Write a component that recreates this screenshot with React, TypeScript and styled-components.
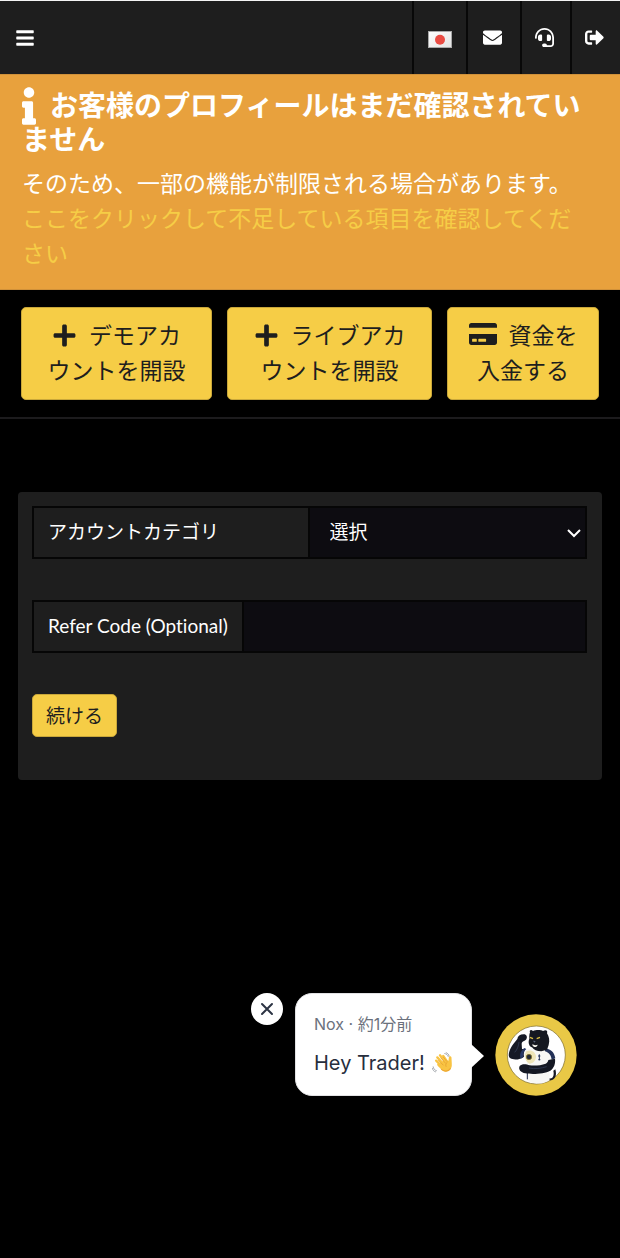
import * as React from "react";
import styled, { createGlobalStyle } from "styled-components";
import {
  FaBars,
  FaCreditCard,
  FaEnvelope,
  FaHeadset,
  FaInfo,
  FaPlus,
  FaSignOutAlt,
} from "react-icons/fa";

const GlobalStyle = createGlobalStyle`
  * {
    box-sizing: border-box;
  }
  body {
    margin: 0;
    background: #000;
    color: #fff;
    font-family: Lato, "Noto Sans CJK JP", sans-serif;
    font-size: 19px;
    font-variant-ligatures: none;
  }
  button, input, select {
    font: inherit;
  }
`;

const TopBar = styled.header`
  display: flex;
  justify-content: space-between;
  height: 74px;
  background: #1e1e1e;
  border-top: 1px solid #f4f4f4;
`;

const BarActions = styled.nav`
  display: flex;
`;

const MenuButton = styled.button`
  display: flex;
  align-items: center;
  padding: 0 15px;
  border: 0;
  background: none;
  color: #fff;
`;

const BarButton = styled.button<{ $narrow?: boolean }>`
  display: flex;
  align-items: center;
  justify-content: center;
  width: ${(p) => (p.$narrow ? 50 : 54)}px;
  padding: 0 4px 0 0;
  border: 0;
  border-left: 2px solid #080808;
  background: none;
  color: #fff;
`;

const Flag = styled.svg`
  display: block;
  margin: 4px 0 0 4px;
`;

const Notice = styled.section`
  padding: 13px 30px 18px 22px;
  border: solid #d0913a;
  border-width: 1px 0;
  background: #e8a13d;
`;

const NoticeTitle = styled.h4`
  margin: 0 0 10px;
  font-size: 28px;
  line-height: 34px;
  font-weight: 700;

  /* negative margins keep the tall icon from stretching the first line */
  svg {
    width: 14px;
    height: 38px;
    margin: -8px 14px -8px 0;
    vertical-align: -1px;
  }
`;

const NoticeText = styled.p`
  margin: 0;
  font-size: 23px;
  line-height: 35px;

  a {
    color: #f6cd46;
    text-decoration: none;
  }
`;

const QuickActions = styled.div`
  display: grid;
  grid-template-columns: 191fr 205fr 152fr;
  gap: 15px;
  padding: 17px 21px;
  border-bottom: 2px solid #1c1b1d;
`;

const QuickButton = styled.button`
  padding: 10px 20px 11px;
  border: 1px solid #c9a73a;
  border-radius: 5px;
  background: #f6cd46;
  color: #1e1e1e;
  font-size: 23px;
  line-height: 35px;

  svg {
    margin-right: 12px;
    vertical-align: -4px;
  }
`;

const Card = styled.form`
  margin: 73px 18px 0;
  padding: 14px 15px 43px 14px;
  border-radius: 4px;
  background: #1e1e1e;
`;

const Field = styled.div`
  display: flex;
  height: 53px;
  margin-bottom: 41px;
  border: 2px solid #060606;
`;

const FieldLabel = styled.label<{ $half?: boolean }>`
  flex: none;
  width: ${(p) => (p.$half ? "50%" : "auto")};
  padding: 0 14px;
  border-right: 2px solid #060606;
  line-height: 48px;
`;

const SelectBox = styled.div`
  display: flex;
  flex: 1;
  position: relative;

  svg {
    position: absolute;
    right: 4px;
    top: 20px;
    pointer-events: none;
  }
`;

const Select = styled.select`
  flex: 1;
  appearance: none;
  padding: 0 20px 2px;
  border: 0;
  border-radius: 0;
  background: #0d0c11;
  color: #fff;
`;

const TextInput = styled.input`
  flex: 1;
  min-width: 0;
  padding: 0 14px;
  border: 0;
  background: #0d0c11;
  color: #fff;
`;

const SubmitButton = styled.button`
  display: block;
  height: 43px;
  padding: 0 13px 2px;
  border: 1px solid #c9a73a;
  border-radius: 5px;
  background: #f6cd46;
  color: #1e1e1e;
`;

const ChatWidget = styled.aside`
  position: fixed;
  right: 43px;
  bottom: 162px;
  display: flex;
  align-items: flex-start;
  font-family: Inter, "Noto Sans CJK JP", sans-serif;
`;

const CloseButton = styled.button`
  display: flex;
  align-items: center;
  justify-content: center;
  width: 32px;
  height: 32px;
  margin-right: 12px;
  padding: 0;
  border: 0;
  border-radius: 50%;
  background: #fff;
  color: #2c3444;
`;

const Bubble = styled.div`
  position: relative;
  width: 177px;
  height: 103px;
  padding: 18px;
  border: 1px solid #e2e2e4;
  border-radius: 17px;
  background: #fff;

  &::after {
    content: "";
    position: absolute;
    left: 100%;
    top: 50px;
    border: 12px solid transparent;
    border-left: 13px solid #fff;
    border-right: 0;
  }
`;

const BubbleMeta = styled.p`
  margin: 0 0 13px;
  color: #6b717d;
  font-size: 16px;
  line-height: 24px;
`;

const BubbleText = styled.p`
  display: flex;
  align-items: center;
  gap: 7px;
  margin: 0;
  color: #272e3d;
  font-size: 20px;
  line-height: 28px;
  white-space: nowrap;
`;

const AvatarButton = styled.button`
  margin: 21px 0 0 23px;
  padding: 0;
  border: 0;
  border-radius: 50%;
  background: none;

  svg {
    display: block;
  }
`;

function JapanFlag() {
  return (
    <Flag width="24" height="18" viewBox="0 0 24 18" aria-hidden="true">
      <defs>
        <linearGradient id="flag" x1="0" y1="0" x2="1" y2="1">
          <stop offset="0" stopColor="#fff" />
          <stop offset="1" stopColor="#e2e2e2" />
        </linearGradient>
      </defs>
      <rect x=".5" y=".5" width="23" height="16" fill="url(#flag)" stroke="#a9a9a9" />
      <circle cx="12" cy="8.7" r="5" fill="#e94b43" />
    </Flag>
  );
}

function WavingHand() {
  return (
    <svg width="26" height="26" viewBox="0 0 72 72" role="img" aria-label="👋">
      <g stroke="#f9c443" strokeWidth="8" strokeLinecap="round" fill="none">
        <path d="M14 28 32 46" />
        <path d="M18 17 40 41" />
        <path d="M27 10 47 35" />
        <path d="M38 12 52 32" />
      </g>
      <path
        d="M27 36 47 23c5 7 8 8 9 4l1-10c1-6 9-5 9 1l1 20c1 12-2 19-10 24-9 5-18 3-26-5L19 45c-4-5 1-9 5-6z"
        fill="#f9c443"
      />
      <path d="m21 26 18 18M29 18l17 19M37 14l13 17M53 32c-6 4-8 10-5 17" fill="none" stroke="#dd9429" strokeWidth="2" />
      <path d="M31 57c9 9 24 9 32-3" fill="none" stroke="#eda832" strokeWidth="4" />
      <path
        d="M43 4c6 1 10 5 12 10M48 1c5 2 9 6 10 11M4 49c1 7 5 11 11 13M1 54c2 7 6 11 11 12"
        fill="none"
        stroke="#8b9096"
        strokeWidth="2.5"
        strokeLinecap="round"
      />
    </svg>
  );
}

function Avatar() {
  return (
    <svg width="82" height="82" viewBox="30 27 246 246" aria-hidden="true">
      <circle cx="153" cy="150" r="122" fill="#e9c846" />
      <circle cx="154" cy="150" r="87" fill="#fff" stroke="#77662c" strokeWidth="2" />
      <path d="M186 217c15 9 23-2 19-20l6-4c7 23-5 40-26 30z" fill="#171a25" />
      <path d="M119 137c13-8 29-7 43-6l34 4c11 5 16 19 12 31l-15 10 1 48c-21 17-50 14-69 1l1-65c-12-5-17-13-7-23z" fill="#f7f7f5" />
      <path d="M127 223v-20" fill="none" stroke="#202a4b" strokeWidth="3" />
      <path d="M180 130c15 2 28 10 31 30l-11 4c-2-14-8-21-20-25z" fill="#243258" />
      <path d="M97 102c1-9 8-14 19-14 9 0 12 8 8 15-5 6-14 6-14 14l1 15 10 1c-4 6-6 14-4 22-10 9-31 11-41 5-11-7-1-30 9-43z" fill="#151925" />
      <path d="M124 132c-7 5-11 13-9 24l-8 5c-5-11 1-25 11-32z" fill="#293866" />
      <path d="M133 101c-1-10 1-16 2-19-3-6 3-10 9-4 7-3 23-4 30 0 9-5 15-1 12 7 6 10 9 21 5 35l-5 14-17 5c-14 0-22-4-28-12-8-2-13-14-8-26z" fill="#151821" />
      <path d="M142 118c0 4 2 7 6 8 5 1 9-2 10-7-5 2-11 2-16-1z" fill="#f2f1eb" />
      <path d="m135 97 9 4M155 101l10-4" stroke="#d9bd40" strokeWidth="4" />
      <path d="M144 107l8 1-4 5z" fill="#5a647a" />
      <path d="M124 139c14-7 27 1 29 15 0 13-9 22-20 22-11-4-18-24-9-37z" fill="#eee5b9" />
      <circle cx="132" cy="156" r="8" fill="#252b36" stroke="#8a7529" strokeWidth="2" />
      <path d="M163 148v18M159 153h7M160 164h6" stroke="#243258" strokeWidth="3" />
      <path d="M190 165l20-4c2 15-3 28-14 36-18 10-55 12-75 8-14-2-22-12-17-22 7-8 20-6 30-2 16 2 34 0 48-5 5-3 7-6 8-11z" fill="#141823" />
      <path d="M132 189c17 4 36 1 53-4M102 111c-1 12-6 24-13 31" fill="none" stroke="#394461" strokeWidth="2" />
    </svg>
  );
}

export default function App() {
  return (
    <>
      <GlobalStyle />
      <TopBar>
        <MenuButton type="button" aria-label="メニュー">
          <FaBars size={20} />
        </MenuButton>
        <BarActions>
          <BarButton type="button" aria-label="日本語">
            <JapanFlag />
          </BarButton>
          <BarButton type="button" aria-label="メッセージ">
            <FaEnvelope size={19} />
          </BarButton>
          <BarButton type="button" aria-label="サポート" $narrow>
            <FaHeadset size={19} />
          </BarButton>
          <BarButton type="button" aria-label="ログアウト" $narrow>
            <FaSignOutAlt size={19} />
          </BarButton>
        </BarActions>
      </TopBar>

      <Notice>
        <NoticeTitle>
          <FaInfo />
          お客様のプロフィールはまだ確認されていません
        </NoticeTitle>
        <NoticeText>
          そのため、一部の機能が制限される場合があります。{" "}
          <a href="#profile">ここをクリックして不足している項目を確認してください</a>
        </NoticeText>
      </Notice>

      <QuickActions>
        <QuickButton type="button">
          <FaPlus size={25} />
          デモアカウントを開設
        </QuickButton>
        <QuickButton type="button">
          <FaPlus size={25} />
          ライブアカウントを開設
        </QuickButton>
        <QuickButton type="button">
          <FaCreditCard size={28} />
          資金を入金する
        </QuickButton>
      </QuickActions>

      <Card onSubmit={(e) => e.preventDefault()}>
        <Field>
          <FieldLabel htmlFor="category" $half>
            アカウントカテゴリ
          </FieldLabel>
          <SelectBox>
            <Select id="category">
              <option>選択</option>
            </Select>
            <svg width="14" height="10" viewBox="0 0 14 10" aria-hidden="true">
              <path d="m1 2 6 6 6-6" fill="none" stroke="#fff" strokeWidth="2" />
            </svg>
          </SelectBox>
        </Field>
        <Field>
          <FieldLabel htmlFor="refer">Refer Code (Optional)</FieldLabel>
          <TextInput id="refer" type="text" />
        </Field>
        <SubmitButton type="submit">続ける</SubmitButton>
      </Card>

      <ChatWidget>
        <CloseButton type="button" aria-label="閉じる">
          <svg width="14" height="14" viewBox="0 0 14 14" aria-hidden="true">
            <path d="m2 2 10 10M12 2 2 12" stroke="currentColor" strokeWidth="2" strokeLinecap="round" />
          </svg>
        </CloseButton>
        <Bubble>
          <BubbleMeta>Nox · 約1分前</BubbleMeta>
          <BubbleText>
            Hey Trader! <WavingHand />
          </BubbleText>
        </Bubble>
        <AvatarButton type="button" aria-label="チャットを開く">
          <Avatar />
        </AvatarButton>
      </ChatWidget>
    </>
  );
}
